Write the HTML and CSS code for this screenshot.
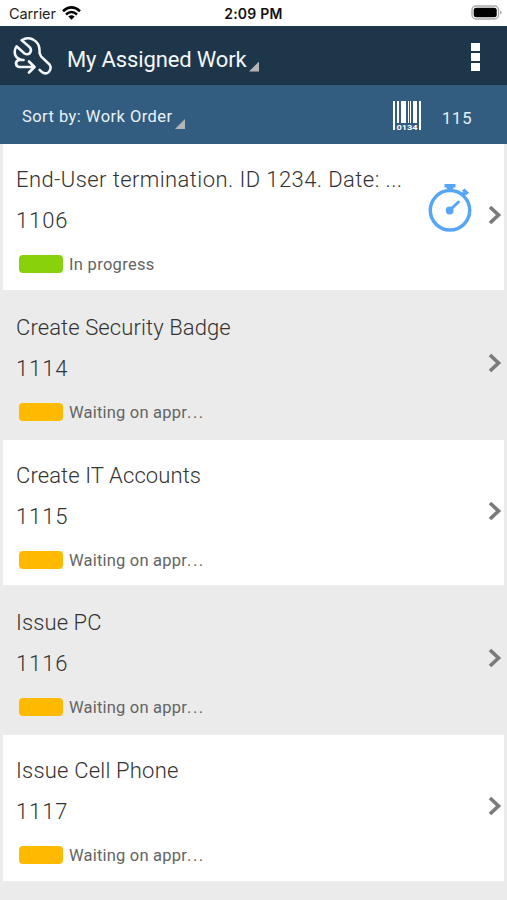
FILE: index.html
```
<!DOCTYPE html>
<html lang="en">
<head>
<meta charset="utf-8">
<title>My Assigned Work</title>
<link rel="stylesheet" href="styles.css">
</head>
<body>
<div class="status-bar">
  <div class="carrier"><span>Carrier</span>
    <svg width="19" height="14" viewBox="0 0 19 14" fill="none" stroke="#000" stroke-width="2.6"><path d="M1 5.200Q9.500-2.400 18 5.200M4 8.400Q9.500 3.600 15 8.400"/><path d="M6.300 10.600Q9.500 8 12.700 10.600L9.500 13.800Z" fill="#000" stroke="none"/></svg>
  </div>
  <div class="time">2:09 PM</div>
  <svg class="battery" width="31" height="16" viewBox="0 0 31 16"><rect x="1" y="1" width="26.500" height="13" rx="4" fill="#fff" stroke="#aaa" stroke-width="1.400"/><rect x="2.700" y="2.700" width="23" height="9.600" rx="2.500" fill="#000"/><path d="M29 5.200Q30.500 6 30.500 7.500T29 9.800Z" fill="#aaa"/></svg>
</div>
<header class="app-bar">
  <svg class="logo" width="42" height="42" viewBox="0 0 42 42" fill="none" stroke="#f3f7fa" stroke-width="2.500" stroke-linecap="round" stroke-linejoin="round"><path d="M10.800 4.200L19 11.500Q21 14.500 19 17Q16.500 19.200 13.500 17.500L5.500 10.300Q2.500 15 4.500 19.500Q6 23 10 23.800"/><path d="M10.800 4.200Q16 .8 22 3.500Q29.500 7.500 28.500 17L30 20.300L38.500 28.500Q41 32 38 35.800Q34.500 39 30.500 35.700L28.600 33.800"/><path d="M12.500 24H8Q5 24.800 5 27.500Q5.300 31 9 31H23M18 25.500L23.500 31L18 36.500" stroke-width="2.700"/></svg>
  <h1>My Assigned Work</h1>
  <i class="corner"></i>
  <div class="more"><i></i><i></i><i></i></div>
</header>
<div class="sort-bar">
  <span class="sort">Sort by: Work Order</span>
  <i class="corner"></i>
  <svg class="barcode" width="30" height="31" viewBox="0 0 30 31"><path fill="#fff" d="M1 1h2v29H1zM5 1h2v22H5zM9 1h5v22H9zM16 1h1v22h-1zM18 1h1v22h-1zM21 1h4v22h-4zM27 1h2v29h-2z"/><text x="4.500" y="30" textLength="21" lengthAdjust="spacingAndGlyphs">0134</text></svg>
  <span class="count">115</span>
</div>
<main class="list">
  <article class="row">
    <div class="info"><h2 class="t1">End-User termination. ID 1234. Date: ...</h2><p class="num">1106</p><div class="state"><i class="chip green"></i><span class="progress">In progress</span></div></div>
    <svg class="timer" width="44" height="49" viewBox="0 0 44 49"><circle cx="22" cy="27.300" r="19.700" fill="none" stroke="#55a6f6" stroke-width="3.500"/><path d="M16.500 1H27.500V4.500H25.500L24.500 8H19.500L18.500 4.500H16.500ZM33 11L35 8.500L34 7.500L36.500 5.500L41 9.800L38.700 12L37.700 11.500L36 14Z" fill="#55a6f6"/><circle cx="21.700" cy="27.500" r="3.900" fill="#55a6f6"/><path d="M22 27L30.500 19" stroke="#55a6f6" stroke-width="3" stroke-linecap="round"/></svg>
    <svg class="chevron" width="14" height="20" viewBox="0 0 14 20"><path d="M2 2L10.500 10L2 18"/></svg>
  </article>
  <article class="row alt">
    <div class="info"><h2 class="t2">Create Security Badge</h2><p class="num">1114</p><div class="state"><i class="chip"></i><span>Waiting on appr<b>...</b></span></div></div>
    <svg class="chevron" width="14" height="20" viewBox="0 0 14 20"><path d="M2 2L10.500 10L2 18"/></svg>
  </article>
  <article class="row">
    <div class="info"><h2 class="t3">Create IT Accounts</h2><p class="num">1115</p><div class="state"><i class="chip"></i><span>Waiting on appr<b>...</b></span></div></div>
    <svg class="chevron" width="14" height="20" viewBox="0 0 14 20"><path d="M2 2L10.500 10L2 18"/></svg>
  </article>
  <article class="row alt">
    <div class="info"><h2 class="t4">Issue PC</h2><p class="num">1116</p><div class="state"><i class="chip"></i><span>Waiting on appr<b>...</b></span></div></div>
    <svg class="chevron" width="14" height="20" viewBox="0 0 14 20"><path d="M2 2L10.500 10L2 18"/></svg>
  </article>
  <article class="row">
    <div class="info"><h2 class="t5">Issue Cell Phone</h2><p class="num">1117</p><div class="state"><i class="chip"></i><span>Waiting on appr<b>...</b></span></div></div>
    <svg class="chevron" width="14" height="20" viewBox="0 0 14 20"><path d="M2 2L10.500 10L2 18"/></svg>
  </article>
</main>
</body>
</html>
```
FILE: styles.css
```
* { box-sizing: border-box; }
body { margin: 0; height: 900px; overflow: hidden; background: #ebebeb; font-family: Roboto, "Liberation Sans", sans-serif; color: #333; }
h1, h2, p { margin: 0; font-weight: 300; white-space: nowrap; }
.status-bar { height: 26px; background: #fff; display: grid; grid-template-columns: 1fr auto 1fr; align-items: center; padding: 0 5px 0 9px; font: 14.5px/26px Inter, sans-serif; color: #222; }
.carrier { display: flex; align-items: center; gap: 6px; letter-spacing: -.1px; }
.carrier span { padding-top: 1px; }
.carrier svg { margin-bottom: 2px; }
.time { font-weight: 600; font-size: 14px; letter-spacing: .25px; padding-top: 1px; margin-right: 4px; color: #111; }
.battery { justify-self: end; margin-bottom: 1px; }
.app-bar { height: 59px; background: #1e364a; color: #f4f7fa; display: flex; align-items: center; padding: 0 27px 0 11px; }
.logo { margin-top: 3px; }
h1 { font-size: 22px; font-weight: 400; letter-spacing: -.15px; line-height: 30px; margin: 9px 0 0 14px; width: 182px; }
.corner { width: 10px; height: 10px; background: #b5b5b5; clip-path: polygon(100% 0, 100% 100%, 0 100%); margin-top: 22px; }
.more { margin: 3px 0 0 auto; display: grid; gap: 2px; }
.more i { width: 9px; height: 8px; background: #fff; }
.sort-bar { height: 59px; background: #325d81; color: #e9f2f9; display: flex; align-items: center; padding: 0 34px 0 22px; font-size: 16.5px; }
.sort { width: 153px; letter-spacing: .45px; white-space: nowrap; margin-top: 4px; }
.sort + .corner { margin-top: 19px; }
.barcode { margin-left: auto; margin-top: 2px; }
.barcode text { font: 700 8px Roboto, sans-serif; fill: #fff; }
.count { width: 31px; margin: 8px 0 0 20px; letter-spacing: .8px; }
.list { padding: 0 3px; }
.row { height: 147.750px; display: flex; align-items: flex-start; background: #fff; border-bottom: 2px solid #ebebeb; }
.row.alt { background: #ebebeb; }
.info { flex: 1; padding: 21px 0 0 13px; }
h2 { font-size: 22px; line-height: 30px; letter-spacing: .1px; }
.t1 { letter-spacing: .42px; }
.t5 { letter-spacing: .2px; }
.num { font-size: 22px; line-height: 30px; letter-spacing: .9px; margin-top: 11px; }
.state { display: flex; align-items: center; margin: 18px 0 0 3px; font-size: 16.5px; line-height: 22px; color: #646464; letter-spacing: .2px; }
.state b { font-weight: 400; letter-spacing: 1.6px; }
.progress { letter-spacing: .3px; }
.chip { width: 44px; height: 18px; border-radius: 4px; background: #ffba00; margin: 0 6px 2px 0; }
.chip.green { background: #89d20b; }
.timer { margin: 39px 16px 0 0; }
.chevron { margin: 61px 2px 0 0; fill: none; stroke: #7b7b7b; stroke-width: 3.700; }
```
